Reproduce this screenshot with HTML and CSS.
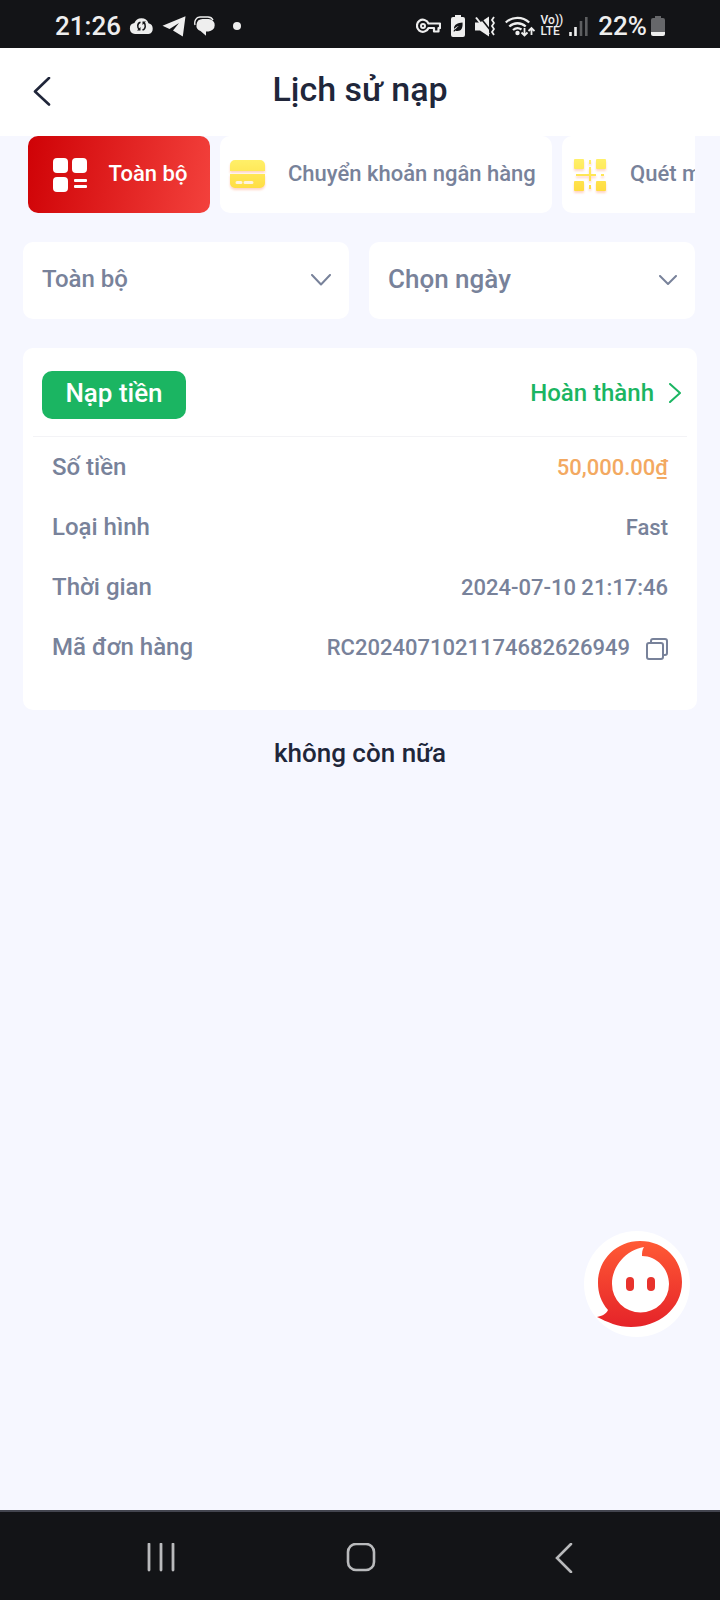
FILE: index.html
```
<!DOCTYPE html>
<html lang="vi">
<head>
    <meta charset="UTF-8">
    <meta name="viewport" content="width=device-width, initial-scale=1.0">
    <title>Lịch sử nạp</title>
    <link rel="stylesheet" href="styles.css">
</head>
<body>
    <div class="status-bar">
        <div class="status-left">
            <span class="clock">21:26</span>
            <svg width="25" height="18" viewBox="0 0 25 18">
                <path fill="#eee" d="M6 17a5.500 5.500 0 0 1-.6-10.900A7.500 7.500 0 0 1 19.500 6.300 5.500 5.500 0 0 1 19.500 17z"/>
                <path fill="none" stroke="#131417" stroke-width="1.500" d="M11.500 5.200C8 6 8 11 10.500 12.500M13.500 13c3.500-1 3.500-6 1-7.500"/>
                <path fill="#131417" d="M8 13.500h3.500V10zM17 4.500h-3.500V8z"/>
            </svg>
            <svg width="24" height="21" viewBox="0 0 24 21">
                <path fill="#eee" d="M.5 9.800 23.500.300 20.800 20.500 11 14.500 17 7 7.500 13z"/>
            </svg>
            <svg width="21" height="20" viewBox="0 0 21 20">
                <path fill="none" stroke="#eee" stroke-width="1.400" d="M1 9C0 5 2 1.200 6 1h8c2 0 4 1 5 3"/>
                <path fill="#eee" d="M8.500 3h6a6.200 6.200 0 0 1 0 12.400H12v4.400L6.500 15A6.200 6.200 0 0 1 8.500 3z"/>
            </svg>
            <span class="dot"></span>
        </div>
        <div class="status-right">
            <div class="status-icons">
                <svg width="25" height="16" viewBox="0 0 25 16">
                    <path fill="none" stroke="#eee" stroke-width="2.200" stroke-linejoin="round" d="M12.500 5.500H24v4.500h-1.500v3.500H18V10h-5.500A6 6 0 1 1 12.500 5.500z"/>
                    <circle cx="7" cy="8" r="2" fill="none" stroke="#eee" stroke-width="2"/>
                </svg>
                <svg width="14" height="22" viewBox="0 0 14 22">
                    <path fill="#eee" d="M4 2V0h6v2h2a2 2 0 0 1 2 2v16a2 2 0 0 1-2 2H2a2 2 0 0 1-2-2V4a2 2 0 0 1 2-2z"/>
                    <path fill="#131417" d="M11.500 7.500c.5 5-1 8.500-5 8.500-1 0-1.500-.3-2-.6L2.800 17v-2c2-1 3-2.500 5-4-2.500.7-3.800 2-4.800 3C2.500 9.500 7 8 11.500 7.500z"/>
                </svg>
                <svg width="20" height="21" viewBox="0 0 20 21">
                    <path fill="#eee" d="M0 6.500h5L14 .500v20L5 14.500H0z"/>
                    <path stroke="#131417" stroke-width="1.600" d="M4 0 16 15"/>
                    <path stroke="#eee" stroke-width="2" d="M1 1.500 14 18"/>
                    <path fill="none" stroke="#eee" stroke-width="1.800" d="M19 1l-2 3 2 3-2 3 2 3-2 3 2 3"/>
                </svg>
                <svg width="30" height="22" viewBox="0 0 30 22">
                    <path fill="none" stroke="#eee" stroke-width="2.300" d="M.8 7.500a17 17 0 0 1 23.400 0M4.300 11.500a12 12 0 0 1 16.400 0M8 15a7 7 0 0 1 8.500-.500"/>
                    <circle cx="12.500" cy="18" r="2.200" fill="#eee"/>
                    <path fill="none" stroke="#eee" stroke-width="1.800" d="M19.500 13v7.500M16.500 17.500l3 3 3-3M26.500 20v-7M23.500 16l3-3 3 3"/>
                </svg>
            </div>
            <span class="volte"><span>Vo))</span><span>LTE</span></span>
            <svg width="19" height="20" viewBox="0 0 19 20">
                <path stroke="#eee" stroke-width="2.600" d="M1.500 20v-4M6.500 20v-9"/>
                <path stroke="#5d5e60" stroke-width="2.600" d="M12 20V5M17.300 20V1"/>
            </svg>
            <span class="battery">
                <span>22%</span>
                <svg width="14" height="20" viewBox="0 0 14 20">
                    <path fill="#66676a" d="M4 2V0h6v2h2a2 2 0 0 1 2 2v12H0V4a2 2 0 0 1 2-2z"/>
                    <path fill="#eee" d="M0 16h14v2a2 2 0 0 1-2 2H2a2 2 0 0 1-2-2z"/>
                </svg>
            </span>
        </div>
    </div>

    <header class="header">
        <button class="back" aria-label="Quay lại">
            <svg width="20" height="30" viewBox="0 0 20 30">
                <path fill="none" stroke="#20263a" stroke-width="2.600" stroke-linecap="round" stroke-linejoin="round" d="M17 1 3 14.500 17 27.500"/>
            </svg>
        </button>
        <h1>Lịch sử nạp</h1>
    </header>

    <main class="content">
        <div class="toolbar">
            <div class="tabs">
                <button class="tab active">
                    <svg width="38" height="38" viewBox="0 0 38 38" fill="#fff">
                        <rect x="2" y="2" width="15" height="15" rx="4"/>
                        <rect x="21" y="2" width="15" height="15" rx="4"/>
                        <rect x="2" y="21" width="15" height="15" rx="4"/>
                        <rect x="23" y="23" width="13" height="3" rx="1"/>
                        <rect x="23" y="29" width="13" height="3" rx="1"/>
                    </svg>
                    <span>Toàn bộ</span>
                </button>
                <button class="tab wide">
                    <svg class="glow" width="38" height="38" viewBox="0 0 38 38">
                        <defs>
                            <linearGradient id="yellow" gradientUnits="userSpaceOnUse" x1="0" y1="3" x2="0" y2="35">
                                <stop offset="0" stop-color="#fff06a"/>
                                <stop offset="1" stop-color="#ffdc3f"/>
                            </linearGradient>
                        </defs>
                        <path fill="url(#yellow)" d="M2 15V9a5 5 0 0 1 5-5h25a5 5 0 0 1 5 5v6zM2 18h35v9a5 5 0 0 1-5 5H7a5 5 0 0 1-5-5z"/>
                        <path stroke="#fff3df" stroke-width="3" stroke-linecap="round" d="M9 26.500h4M17 26.500h7"/>
                    </svg>
                    <span>Chuyển khoản ngân hàng</span>
                </button>
                <button class="tab wide">
                    <svg class="glow" width="38" height="38" viewBox="0 0 38 38" fill="url(#yellow)">
                        <rect x="4" y="3" width="10" height="10" rx="1"/>
                        <rect x="26" y="3" width="10" height="10" rx="1"/>
                        <rect x="4" y="25" width="10" height="10" rx="1"/>
                        <rect x="26" y="25" width="10" height="10" rx="1"/>
                        <rect x="19" y="4" width="2" height="4"/>
                        <rect x="19" y="11" width="2" height="14"/>
                        <rect x="19" y="29" width="2" height="4"/>
                        <rect x="6" y="18" width="20" height="2"/>
                        <rect x="31" y="18" width="3" height="2"/>
                    </svg>
                    <span>Quét mã</span>
                </button>
            </div>
            <div class="filters">
                <div class="filter">
                    <select class="filter-control" aria-label="Trạng thái">
                        <option>Toàn bộ</option>
                    </select>
                    <svg class="chevron" width="22" height="14" viewBox="0 0 22 14">
                        <path fill="none" stroke="#78829a" stroke-width="2" stroke-linecap="round" stroke-linejoin="round" d="M2 1l9 9.500L20 1"/>
                    </svg>
                </div>
                <button class="filter filter-date">
                    <span>Chọn ngày</span>
                    <svg width="18" height="12" viewBox="0 0 18 12">
                        <path fill="none" stroke="#78829a" stroke-width="2" stroke-linecap="round" stroke-linejoin="round" d="M1 1l8 8 8-8"/>
                    </svg>
                </button>
            </div>
        </div>

        <section class="card">
            <div class="card-head">
                <span class="badge">Nạp tiền</span>
                <a href="#" class="state">
                    <span>Hoàn thành</span>
                    <svg width="12" height="20" viewBox="0 0 12 20">
                        <path fill="none" stroke="#1bb562" stroke-width="2" stroke-linecap="round" stroke-linejoin="round" d="M1 1l10 9-10 9"/>
                    </svg>
                </a>
            </div>
            <dl class="details">
                <div class="row">
                    <dt>Số tiền</dt>
                    <dd class="amount">50,000.00₫</dd>
                </div>
                <div class="row">
                    <dt>Loại hình</dt>
                    <dd>Fast</dd>
                </div>
                <div class="row">
                    <dt>Thời gian</dt>
                    <dd>2024-07-10 21:17:46</dd>
                </div>
                <div class="row">
                    <dt>Mã đơn hàng</dt>
                    <dd class="order">
                        <span>RC2024071021174682626949</span>
                        <button class="copy" aria-label="Sao chép">
                            <svg width="22" height="22" viewBox="0 0 22 22" fill="none" stroke="#78829a" stroke-width="2" stroke-linejoin="round">
                                <rect x="1" y="5" width="16" height="16" rx="2"/>
                                <path d="M5 5V3a2 2 0 0 1 2-2h12a2 2 0 0 1 2 2v12a2 2 0 0 1-2 2h-2"/>
                            </svg>
                        </button>
                    </dd>
                </div>
            </dl>
        </section>
        <p class="no-more">không còn nữa</p>
    </main>

    <button class="support" aria-label="Hỗ trợ">
        <svg width="106" height="106" viewBox="0 0 106 106">
            <defs>
                <linearGradient id="red" x1="0" y1="0" x2="0" y2="1">
                    <stop offset="0" stop-color="#ff5a35"/>
                    <stop offset="1" stop-color="#e52329"/>
                </linearGradient>
            </defs>
            <path fill="url(#red)" d="M56 10C81 10 98 29 98 51 98 78 74 96 47 96 34 96 23 91 13 86 18 85 22 83 24 79 17 71 14 62 14 52 14 28 33 10 56 10z"/>
            <path fill="#fff" d="M60 16c-2 3-2 6-2 9 15 0 27 13 27 28a28 28 0 0 1-57 0C28 35 42 19 60 16z"/>
            <rect x="42" y="46" width="8" height="14" rx="4" fill="#e8332d"/>
            <rect x="63" y="46" width="8" height="14" rx="4" fill="#e8332d"/>
        </svg>
    </button>

    <nav class="nav-bar">
        <button aria-label="Gần đây">
            <svg width="30" height="30" viewBox="0 0 30 30">
                <path stroke="#b9babc" stroke-width="2.800" stroke-linecap="round" d="M2 1v26M14 1v26M26 1v26"/>
            </svg>
        </button>
        <button aria-label="Trang chủ">
            <svg width="30" height="30" viewBox="0 0 30 30">
                <rect x="2" y="1" width="26" height="26" rx="8" fill="none" stroke="#b9babc" stroke-width="2.600"/>
            </svg>
        </button>
        <button aria-label="Trở về">
            <svg width="30" height="30" viewBox="0 0 30 30">
                <path fill="none" stroke="#b9babc" stroke-width="2.600" stroke-linecap="round" d="M26 1 12 15l14 14"/>
            </svg>
        </button>
    </nav>
</body>
</html>
```
FILE: styles.css
```
* {
    box-sizing: border-box;
}
body {
    margin: 0;
    min-height: 100vh;
    display: flex;
    flex-direction: column;
    font-family: Roboto, "Noto Sans", sans-serif;
    font-size: 24px;
    font-weight: 500;
    color: #78829a;
    background-color: #f6f7ff;
}
button, select {
    font: inherit;
    color: inherit;
    border: none;
    padding: 0;
    background: none;
    cursor: pointer;
}
svg {
    display: block;
    flex-shrink: 0;
}
.status-bar {
    height: 48px;
    padding: 4px 55px 0;
    display: flex;
    justify-content: space-between;
    font-size: 26px;
    color: #eee;
    background-color: #131417;
}
.status-left, .status-right, .status-icons {
    display: flex;
    align-items: center;
}
.status-left {
    gap: 8px;
}
.status-right {
    gap: 6px;
}
.status-icons {
    gap: 10px;
}
.dot {
    width: 8px;
    height: 8px;
    margin-left: 10px;
    border-radius: 50%;
    background-color: #eee;
}
.volte {
    display: flex;
    flex-direction: column;
    font-size: 12px;
    line-height: 11px;
}
.battery {
    display: flex;
    align-items: center;
    gap: 4px;
    margin-left: 4px;
}
.header {
    height: 88px;
    padding: 0 32px;
    display: grid;
    grid-template-columns: 40px 1fr 40px;
    align-items: center;
    background-color: #fff;
}
.header h1 {
    margin: 0;
    padding-bottom: 6px;
    font-size: 34px;
    font-weight: 500;
    line-height: 40px;
    text-align: center;
    color: #20263a;
}
.content {
    flex: 1;
    padding: 0 23px;
}
.toolbar {
    margin-right: 2px;
}
.tabs {
    display: flex;
    gap: 10px;
    padding-left: 5px;
    overflow: hidden;
}
.tab {
    flex-shrink: 0;
    min-width: 182px;
    height: 77px;
    padding: 0 8px;
    display: flex;
    justify-content: center;
    align-items: center;
    gap: 20px;
    font-size: 22px;
    border-radius: 10px;
    background-color: #fff;
    white-space: nowrap;
}
.tab span {
    padding-bottom: 2px;
}
.tab.wide {
    min-width: 332px;
    justify-content: flex-start;
    gap: 22px;
}
.tab.active {
    color: #fff;
    background: linear-gradient(100deg, #cf0206, #f3413c);
}
.glow {
    filter: drop-shadow(0 2px 1px rgba(255, 150, 110, 0.4));
}
.filters {
    display: grid;
    grid-template-columns: 1fr 1fr;
    gap: 20px;
    margin: 29px 0;
}
.filter {
    height: 77px;
    display: grid;
    align-items: center;
    border-radius: 10px;
    background-color: #fff;
}
.filter-control {
    grid-area: 1 / 1;
    width: 100%;
    height: 100%;
    padding: 0 19px 4px;
    appearance: none;
}
.chevron {
    grid-area: 1 / 1;
    justify-self: end;
    margin-right: 17px;
    pointer-events: none;
}
.filter-date {
    display: flex;
    justify-content: space-between;
    padding: 0 18px 0 19px;
    font-size: 26px;
}
.filter-date span {
    padding-bottom: 4px;
}
.card {
    padding: 23px 10px 33px;
    border-radius: 10px;
    background-color: #fff;
}
.card-head {
    display: flex;
    justify-content: space-between;
    align-items: center;
    padding: 0 6px 17px 9px;
    border-bottom: 1px solid #f3f3f6;
}
.badge {
    min-width: 144px;
    padding: 0 20px 4px;
    font-size: 26px;
    line-height: 44px;
    text-align: center;
    color: #fff;
    border-radius: 10px;
    background-color: #1bb562;
}
.state {
    display: flex;
    align-items: center;
    gap: 15px;
    padding-bottom: 4px;
    color: #1bb562;
    text-decoration: none;
}
.details {
    margin: 0;
    padding: 0 19px;
}
.row {
    height: 60px;
    display: flex;
    justify-content: space-between;
    align-items: center;
}
.row dd {
    margin: 0;
    font-size: 22px;
}
.row .amount {
    color: #f3a961;
}
.row .order {
    display: flex;
    align-items: center;
    gap: 16px;
}
.copy {
    padding-top: 4px;
}
.no-more {
    margin: 27px 0;
    font-size: 26px;
    line-height: 32px;
    text-align: center;
    color: #20263a;
}
.support {
    position: fixed;
    right: 30px;
    bottom: 263px;
    border-radius: 50%;
    background-color: #fff;
}
.nav-bar {
    height: 90px;
    padding: 4px 60px 0 62px;
    display: grid;
    grid-template-columns: repeat(3, 1fr);
    align-items: center;
    justify-items: center;
    border-top: 2px solid #43454f;
    background-color: #131417;
}
```
